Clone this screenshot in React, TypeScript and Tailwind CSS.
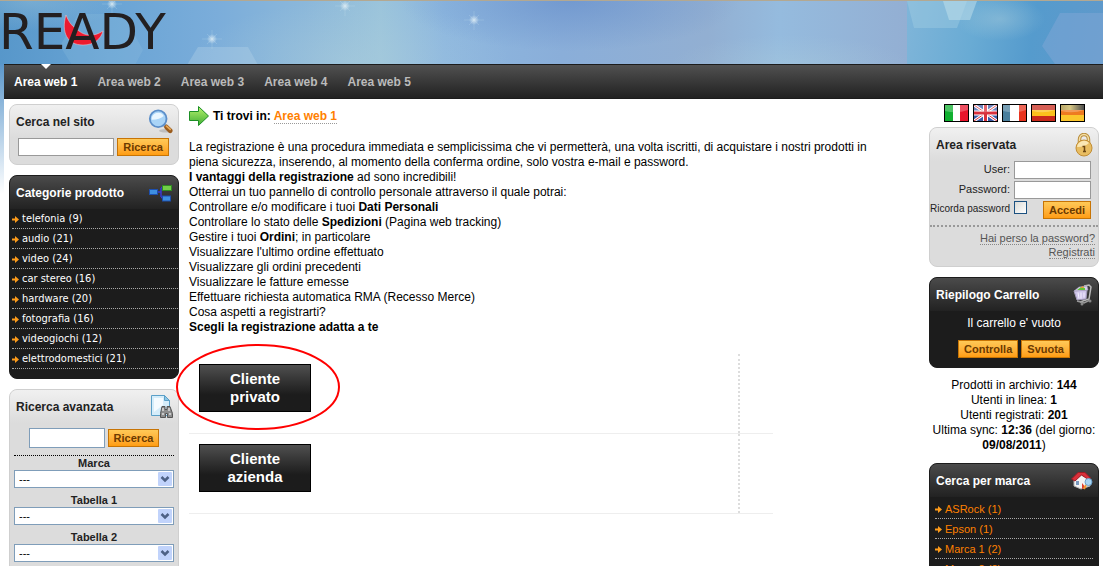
import React from 'react'

const navItems = ['Area web 1', 'Area web 2', 'Area web 3', 'Area web 4', 'Area web 5']

const categories = [
  'telefonia (9)',
  'audio (21)',
  'video (24)',
  'car stereo (16)',
  'hardware (20)',
  'fotografia (16)',
  'videogiochi (12)',
  'elettrodomestici (21)',
]

const brands = ['ASRock (1)', 'Epson (1)', 'Marca 1 (2)', 'Marca 2 (2)']

const filters = ['Marca', 'Tabella 1', 'Tabella 2']

const HeaderBackground = () => (
  <svg className="absolute inset-0 h-full w-full" aria-hidden="true">
    <defs>
      <linearGradient id="sky" x1="0" x2="1" y1="0" y2="0">
        <stop offset="0" stopColor="#5797ca" />
        <stop offset="0.12" stopColor="#69a4d5" />
        <stop offset="0.24" stopColor="#7badda" />
        <stop offset="0.34" stopColor="#8cb8da" />
        <stop offset="0.42" stopColor="#9bc4db" />
        <stop offset="0.49" stopColor="#8db7df" />
        <stop offset="0.62" stopColor="#8aaed9" />
        <stop offset="0.78" stopColor="#92afd2" />
        <stop offset="0.86" stopColor="#95bbde" />
        <stop offset="1" stopColor="#93afd3" />
      </linearGradient>
      <linearGradient id="skyRepeat" x1="0" x2="196" y1="0" y2="30" gradientUnits="userSpaceOnUse">
        <stop offset="0" stopColor="#7fb5d9" />
        <stop offset="0.35" stopColor="#69abd4" />
        <stop offset="0.65" stopColor="#559bcd" />
        <stop offset="1" stopColor="#5f99cb" />
      </linearGradient>
      <radialGradient id="light">
        <stop offset="0" stopColor="#b0d0dc" stopOpacity="0.8" />
        <stop offset="1" stopColor="#b0d0dc" stopOpacity="0" />
      </radialGradient>
      <radialGradient id="deep">
        <stop offset="0" stopColor="#6089c8" stopOpacity="0.55" />
        <stop offset="1" stopColor="#6089c8" stopOpacity="0" />
      </radialGradient>
      <radialGradient id="glow">
        <stop offset="0" stopColor="#e4f1f7" stopOpacity="0.8" />
        <stop offset="1" stopColor="#e4f1f7" stopOpacity="0" />
      </radialGradient>
      <g id="star" stroke="#e4f1f7" strokeOpacity="0.35">
        <path d="M-10 0H10M0-9V10M-5-5L5 5M-5 5L5-5" strokeWidth="0.5" />
        <circle r="5" fill="url(#glow)" stroke="none" />
      </g>
    </defs>
    <rect width="907" height="100%" fill="url(#sky)" />
    <ellipse cx="30" cy="0" rx="90" ry="30" fill="url(#light)" opacity="0.4" />
    <ellipse cx="350" cy="60" rx="160" ry="60" fill="url(#light)" opacity="0.5" />
    <ellipse cx="570" cy="0" rx="170" ry="50" fill="url(#deep)" />
    <ellipse cx="790" cy="64" rx="120" ry="30" fill="url(#light)" opacity="0.4" />
    <path d="M78 13h45l20 36-8 15H72L60 45z" fill="#9ac6e3" opacity="0.2" />
    <path d="M198 46h50l10 18h-71z" fill="#b7d5e8" opacity="0.35" />
    <use href="#star" x="212" y="38" />
    <use href="#star" x="474" y="19" />
    <use href="#star" x="345" y="5" />
    <use href="#star" x="112" y="3" />
    <svg x="907" y="0" width="907" height="64">
      <rect width="100%" height="100%" fill="url(#skyRepeat)" />
      <ellipse cx="93" cy="18" rx="45" ry="22" fill="url(#light)" opacity="0.5" />
      <path d="M0 0h60l-10 27H7z" fill="#a5d0e3" opacity="0.4" />
      <path d="M36 0h34l-7 19H42z" fill="#c3e2ec" opacity="0.5" />
      <path d="M153 12h45l20 36-8 15h-62l-13-18z" fill="#84a9d6" opacity="0.45" />
    </svg>
  </svg>
)

const Logo = () => (
  <svg className="relative block" width="206" height="60" role="img" aria-label="READY">
    <path
      d="M66 14c-5 17 1 30 17 30 11 0 18-6 20-14-9 6-18 5-24 0-6-4-10-8-13-16z"
      fill="#ed1b2f"
      stroke="#e9d5da"
      strokeWidth="0.5"
    />
    <text
      x="-1"
      y="48"
      fill="#231f20"
      fontFamily="'DejaVu Sans', sans-serif"
      fontSize="50"
    >
      READY
    </text>
  </svg>
)

const SearchIcon = () => (
  <svg width="25" height="25" viewBox="0 0 27 26" aria-hidden="true">
    <ellipse cx="19" cy="23" rx="7" ry="2" fill="#000" opacity="0.15" />
    <path d="M17 16l2 2" stroke="#9aa7b5" strokeWidth="4" />
    <path d="M20 19l4 4" stroke="#9a5b1c" strokeWidth="5" strokeLinecap="round" />
    <path d="M20 18l4 3.500" stroke="#e6a858" strokeWidth="2" strokeLinecap="round" />
    <circle cx="11" cy="10" r="9" fill="#a9d4f7" stroke="#5b8ec9" strokeWidth="2" />
    <path d="M4 11a7 7 0 0 1 13-4q-4 4-13 4z" fill="#e9f6ff" />
  </svg>
)

const TreeIcon = () => (
  <svg width="24" height="18" viewBox="0 0 24 18" aria-hidden="true">
    <path d="M9 8h3M12 4v9M12 3.500h2M12 13.500h2" stroke="#3a3ad0" strokeWidth="1.500" fill="none" />
    <rect x="0.500" y="5.500" width="8" height="5" fill="#3e8fe0" stroke="#1d4fae" />
    <rect x="13.500" y="1.500" width="9" height="5" fill="#72cf47" stroke="#2f8a22" />
    <rect x="13.500" y="12" width="8" height="5" fill="#3e8fe0" stroke="#1d4fae" />
  </svg>
)

const DocumentIcon = () => (
  <svg width="24" height="26" viewBox="0 0 24 26" aria-hidden="true">
    <path d="M2.500 1.500h13l5 5v15h-18z" fill="#d5edfa" stroke="#5ba0c8" />
    <path d="M5 4h9v7L5 18z" fill="#f4fbff" />
    <path d="M15.500 1.500v5h5z" fill="#8cc6e6" stroke="#5ba0c8" />
    <path
      d="M13 12.500h3v3h2v-3h3l2.500 7v4h-5v-4h-2v4h-5v-4z"
      fill="#8d8d8d"
      stroke="#555"
    />
    <path d="M13 20h2M20 20h2M14 14v3M20 14v3" stroke="#ddd" strokeWidth="1.500" />
  </svg>
)

const LockIcon = () => (
  <svg width="18" height="24" viewBox="0 0 18 24" aria-hidden="true">
    <path d="M4.500 12V6.500a4.500 5 0 0 1 9 0V12" fill="none" stroke="#b98d3c" strokeWidth="3.500" />
    <path d="M4.500 12V6.500a4.500 5 0 0 1 9 0V12" fill="none" stroke="#f4dfa5" strokeWidth="1.500" />
    <circle cx="9" cy="15" r="8" fill="#e8bd62" stroke="#c18d35" />
    <path d="M2 14a7 7 0 0 1 12-4q-4 4-12 4z" fill="#fae7b4" />
    <path d="M7.500 13.500h2v5M8 18.500h3" stroke="#6b4714" strokeWidth="1.500" fill="none" />
  </svg>
)

const CartIcon = () => (
  <svg width="20" height="22" viewBox="0 0 20 22" aria-hidden="true">
    <path d="M11 2l5-1 2 2-2 12-9 3" fill="none" stroke="#b9b9b9" strokeWidth="1.500" />
    <path d="M1 7l13-1-1 9-9 1z" fill="#cfc4ea" stroke="#a39bb8" />
    <path d="M1 7l5-4 8-1 1 4z" fill="#d8d0ef" stroke="#a39bb8" strokeWidth="0.500" />
    <path d="M4 6l4-3 4 1v2z" fill="#62c43a" />
    <path d="M7 4l3-2 1 2z" fill="#e99b36" />
    <path d="M5 8.500l1 6M8 8.500v6M11 8.500v5" stroke="#f4f0ff" />
    <path d="M4 17l7 2 6-3" fill="none" stroke="#999" strokeWidth="1.500" />
    <circle cx="9" cy="20" r="1.500" fill="#888" />
    <circle cx="17" cy="17" r="1.500" fill="#888" />
  </svg>
)

const HouseIcon = () => (
  <svg width="22" height="18" viewBox="0 0 22 18" aria-hidden="true">
    <path d="M3 8l7-5 9 4v7l-9 3-7-3z" fill="#f3f3f3" stroke="#b5b5b5" />
    <path d="M0.500 7L7 0.500h7L19.500 6l-3 1-6-4L4 9z" fill="#d9303a" stroke="#9e1b24" />
    <path d="M5 9h3v4H5z" fill="#7898bd" />
    <path d="M11 17v-6l4 5z" fill="#e0402f" />
    <path d="M15 13l-2 4" stroke="#f09a32" strokeWidth="2" />
    <circle cx="17.500" cy="10" r="3.500" fill="#a8d5f3" stroke="#6b9fc9" />
  </svg>
)

const SmallArrow = () => (
  <svg className="shrink-0" width="7" height="7" viewBox="0 0 7 7" aria-hidden="true">
    <path d="M0 2.500h3V0L7 3.500 3 7V4.500H0z" fill="#ff9c1a" />
  </svg>
)

const GreenArrow = () => (
  <svg width="20" height="20" viewBox="0 0 20 20" aria-hidden="true">
    <defs>
      <linearGradient id="leaf" x1="0" x2="0" y1="0" y2="1">
        <stop offset="0" stopColor="#b8f36d" />
        <stop offset="1" stopColor="#40ad35" />
      </linearGradient>
    </defs>
    <path d="M0.500 5.500h9v-5l10 9.500-10 9.500v-5h-9z" fill="url(#leaf)" stroke="#1c8f25" />
  </svg>
)

const Flag = ({ label, children }: { label: string; children: React.ReactNode }) => (
  <a href="#" aria-label={label} className="block h-[18px] w-[25px] border border-black bg-white">
    <svg width="23" height="16" viewBox="0 0 23 16" aria-hidden="true">
      {children}
      <path d="M0 0h23v5Q12 9 0 6z" fill="#fff" opacity="0.25" />
    </svg>
  </a>
)

const Flags = () => (
  <div className="flex h-[18px] justify-center gap-1">
    <Flag label="Italiano">
      <path d="M0 0h8v16H0z" fill="#10b030" />
      <path d="M15 0h8v16h-8z" fill="#e8142c" />
    </Flag>
    <Flag label="English">
      <path d="M0 0h23v16H0z" fill="#3a5aa8" />
      <path d="M0 0l23 16M23 0L0 16" stroke="#fff" strokeWidth="3" />
      <path d="M0 0l23 16M23 0L0 16" stroke="#d8303c" strokeWidth="1" />
      <path d="M11.500 0v16M0 8h23" stroke="#fff" strokeWidth="5" />
      <path d="M11.500 0v16M0 8h23" stroke="#d8303c" strokeWidth="3" />
    </Flag>
    <Flag label="Français">
      <path d="M0 0h7v16H0z" fill="#4a7f9c" />
      <path d="M16 0h7v16h-7z" fill="#e8341f" />
    </Flag>
    <Flag label="Español">
      <path d="M0 0h23v16H0z" fill="#c92a1c" />
      <path d="M0 5h23v6H0z" fill="#fbc11c" />
    </Flag>
    <Flag label="Deutsch">
      <defs>
        <linearGradient id="goldToBlack">
          <stop offset="0" stopColor="#a08a35" />
          <stop offset="0.4" stopColor="#c9b35c" />
          <stop offset="1" stopColor="#111" />
        </linearGradient>
      </defs>
      <path d="M0 0h23v6H0z" fill="url(#goldToBlack)" />
      <path d="M0 5h23v6H0z" fill="#ee7a20" />
      <path d="M0 10h23v6H0z" fill="#fbc62c" />
    </Flag>
  </div>
)

interface PanelProps {
  title: string
  icon: React.ReactNode
  dark?: boolean
  className?: string
  children: React.ReactNode
}

const Panel: React.FC<PanelProps> = ({ title, icon, dark, className = '', children }) => (
  <section
    className={`rounded-[8px] border ${
      dark
        ? 'border-[#1c1c1c] bg-[#1c1c1c] text-white'
        : 'border-[#cfcfcf] bg-[#dcdcdc] text-[#222]'
    } ${className}`}
  >
    <div
      className={`flex h-[33px] items-center justify-between rounded-t-[7px] bg-linear-to-b pr-[5px] pl-1.5 ${
        dark ? 'from-[#4b4b4b] to-[#222]' : 'from-[#f0f0f0] to-[#dcdcdc]'
      }`}
    >
      <h2 className="text-[12px] font-bold">{title}</h2>
      {icon}
    </div>
    {children}
  </section>
)

const OrangeButton = ({ children }: { children: string }) => (
  <button
    type="button"
    className="h-[18px] border border-[#c77405] bg-linear-to-b from-[#ffc956] to-[#ff9d10] px-[5px] text-[11px] leading-[16px] font-bold text-[#6b3a00]"
  >
    {children}
  </button>
)

const FilterSelect = ({ label }: { label: string }) => (
  <label className="mb-[5px] block text-center text-[11px] font-bold">
    <span className="block leading-[14px]">{label}</span>
    <span className="relative block">
      <select className="block h-[18px] w-full appearance-none border border-[#7f9db9] bg-white px-1 text-[11px] leading-[16px] font-normal text-black">
        <option>---</option>
      </select>
      <svg
        className="pointer-events-none absolute top-0.5 right-0.5"
        width="14"
        height="14"
        viewBox="0 0 14 14"
        aria-hidden="true"
      >
        <rect width="14" height="14" rx="1" fill="#c1d3fb" />
        <path d="M3.500 5L7 8.500 10.500 5" fill="none" stroke="#4d6185" strokeWidth="2.500" />
      </svg>
    </span>
  </label>
)

const ClientButton = ({ children }: { children: React.ReactNode }) => (
  <button
    type="button"
    className="block h-12 w-28 border border-black bg-linear-to-b from-[#505050] to-[#1c1c1c] to-65% text-[15px] leading-[18px] font-bold text-white"
  >
    {children}
  </button>
)

const LeftColumn = () => (
  <aside className="flex w-[170px] shrink-0 flex-col gap-2.5">
    <Panel title="Cerca nel sito" icon={<SearchIcon />} className="pb-2">
      <form className="flex gap-[3px] pr-[9px] pl-2">
        <input
          type="text"
          aria-label="Cerca nel sito"
          className="h-[18px] w-0 flex-1 border border-[#999] bg-white px-1 text-[11px]"
        />
        <OrangeButton>Ricerca</OrangeButton>
      </form>
    </Panel>

    <Panel title="Categorie prodotto" icon={<TreeIcon />} dark className="pb-[9px]">
      <ul className="pl-0.5">
        {categories.map((category) => (
          <li key={category} className="border-b border-dotted border-[#aaa]">
            <a
              href="#"
              className="flex h-[19px] items-center gap-[3px] pt-0.5 font-['DejaVu_Sans_Condensed','DejaVu_Sans',sans-serif] text-[11px] text-white"
            >
              <SmallArrow />
              {category}
            </a>
          </li>
        ))}
      </ul>
    </Panel>

    <Panel title="Ricerca avanzata" icon={<DocumentIcon />} className="pb-2">
      <form className="px-1 pt-[5px]">
        <div className="flex items-center justify-center gap-[3px] pb-[7px]">
          <input
            type="text"
            aria-label="Ricerca avanzata"
            className="h-5 w-19 border border-[#7f9db9] bg-white px-1 text-[11px]"
          />
          <OrangeButton>Ricerca</OrangeButton>
        </div>
        <div className="border-t border-dotted border-black">
          {filters.map((filter) => (
            <FilterSelect key={filter} label={filter} />
          ))}
        </div>
      </form>
    </Panel>
  </aside>
)

const MainContent = () => (
  <main className="min-w-0 flex-1 text-[12px] leading-[15px] text-black">
    <div className="flex h-6 items-center gap-1 font-bold">
      <GreenArrow />
      <p>
        Ti trovi in:{' '}
        <a href="#" className="border-b border-dotted border-[#999] text-[#ff8000]">
          Area web 1
        </a>
      </p>
    </div>

    <p className="pt-3">
      La registrazione è una procedura immediata e semplicissima che vi permetterà, una volta
      iscritti, di acquistare i nostri prodotti in
      <br />
      piena sicurezza, inserendo, al momento della conferma ordine, solo vostra e-mail e password.
      <br />
      <b>I vantaggi della registrazione</b> ad sono incredibili!
      <br />
      Otterrai un tuo pannello di controllo personale attraverso il quale potrai:
      <br />
      Controllare e/o modificare i tuoi <b>Dati Personali</b>
      <br />
      Controllare lo stato delle <b>Spedizioni</b> (Pagina web tracking)
      <br />
      Gestire i tuoi <b>Ordini</b>; in particolare
      <br />
      Visualizzare l'ultimo ordine effettuato
      <br />
      Visualizzare gli ordini precedenti
      <br />
      Visualizzare le fatture emesse
      <br />
      Effettuare richiesta automatica RMA (Recesso Merce)
      <br />
      Cosa aspetti a registrarti?
      <br />
      <b>Scegli la registrazione adatta a te</b>
    </p>

    <div className="mt-[19px] w-4/5">
      <div className="border-b border-[#eee]">
        <div className="mr-[33px] border-r-2 border-dotted border-[#ddd] p-2.5 pb-[21px]">
          <div className="relative w-28">
            <ClientButton>
              Cliente
              <br />
              privato
            </ClientButton>
            <svg
              className="pointer-events-none absolute -top-5 -left-6 z-10"
              width="166"
              height="88"
              aria-hidden="true"
            >
              <ellipse cx="83" cy="43" rx="81" ry="42" fill="none" stroke="#f00" strokeWidth="2" />
            </svg>
          </div>
        </div>
      </div>
      <div className="border-b border-[#eee]">
        <div className="mr-[33px] border-r-2 border-dotted border-[#ddd] p-2.5 pb-[21px]">
          <ClientButton>
            Cliente
            <br />
            azienda
          </ClientButton>
        </div>
      </div>
    </div>
  </main>
)

const RightColumn = () => (
  <aside className="w-[170px] shrink-0">
    <Flags />

    <Panel title="Area riservata" icon={<LockIcon />} className="mt-[5px] pb-[7px]">
      <form className="text-[11px]">
        <div className="grid grid-cols-[1fr_77px] gap-x-1 gap-y-0.5 pr-[7px] text-right">
          <label htmlFor="user">User:</label>
          <input id="user" type="text" className="h-[18px] w-full border border-[#999] bg-white" />
          <label htmlFor="password">Password:</label>
          <input
            id="password"
            type="password"
            className="h-[18px] w-full border border-[#999] bg-white"
          />
          <label htmlFor="remember" className="text-[10px] whitespace-nowrap">
            Ricorda password
          </label>
          <div className="flex justify-between">
            <input
              id="remember"
              type="checkbox"
              className="h-[13px] w-[13px] appearance-none border border-[#1c5180] bg-linear-to-br from-[#dcdcd7] to-white"
            />
            <OrangeButton>Accedi</OrangeButton>
          </div>
        </div>
        <div className="mt-1.5 border-t-2 border-dotted border-[#999] pt-1 pr-[3px] text-right leading-[14px] text-[#555]">
          <a href="#" className="border-b border-dotted border-[#888]">
            Hai perso la password?
          </a>
          <br />
          <a href="#" className="border-b border-dotted border-[#888]">
            Registrati
          </a>
        </div>
      </form>
    </Panel>

    <Panel title="Riepilogo Carrello" icon={<CartIcon />} dark className="mt-2.5 pb-[9px]">
      <p className="text-center text-[12px] leading-6">Il carrello e' vuoto</p>
      <div className="mt-[5px] flex justify-center gap-[3px]">
        <OrangeButton>Controlla</OrangeButton>
        <OrangeButton>Svuota</OrangeButton>
      </div>
    </Panel>

    <p className="py-2.5 text-center text-[12px] leading-[15px] text-black">
      Prodotti in archivio: <b>144</b>
      <br />
      Utenti in linea: <b>1</b>
      <br />
      Utenti registrati: <b>201</b>
      <br />
      Ultima sync: <b>12:36</b> (del giorno:
      <br />
      <b>09/08/2011</b>)
    </p>

    <Panel title="Cerca per marca" icon={<HouseIcon />} dark className="pb-[9px]">
      <ul className="px-[5px] pt-0.5">
        {brands.map((brand) => (
          <li key={brand} className="border-b border-dotted border-[#aaa]">
            <a
              href="#"
              className="flex h-[19px] items-center gap-[3px] pt-0.5 text-[11px] text-[#ff8000]"
            >
              <SmallArrow />
              {brand}
            </a>
          </li>
        ))}
      </ul>
    </Panel>
  </aside>
)

const App: React.FC = () => (
  <div className="min-h-screen bg-white font-['Liberation_Sans',Arial,sans-serif]">
    <header className="relative h-16 overflow-hidden border-t border-[#b3a891]">
      <HeaderBackground />
      <Logo />
    </header>

    <div className="bg-[linear-gradient(#5b97cb,#fff_130px)] pl-1">
      <nav className="border-y border-[#1c1c1c] bg-linear-to-b from-[#515151] to-[#222]">
        <ul className="flex h-[33px] gap-5 pl-2.5 text-[12px] font-bold text-[#bbb]">
          {navItems.map((item, index) => (
            <li key={item} className="relative flex items-center">
              {index === 0 && (
                <svg
                  className="absolute -top-px left-1/2 -translate-x-1/2"
                  width="10"
                  height="5"
                  aria-hidden="true"
                >
                  <path d="M0 0h10L5 5z" fill="#fff" />
                </svg>
              )}
              <a href="#" className={index === 0 ? 'text-white' : ''}>
                {item}
              </a>
            </li>
          ))}
        </ul>
      </nav>

      <div className="flex gap-2.5 bg-white pt-[5px] pr-1 pb-2.5 pl-[5px]">
        <LeftColumn />
        <MainContent />
        <RightColumn />
      </div>
    </div>
  </div>
)

export default App
